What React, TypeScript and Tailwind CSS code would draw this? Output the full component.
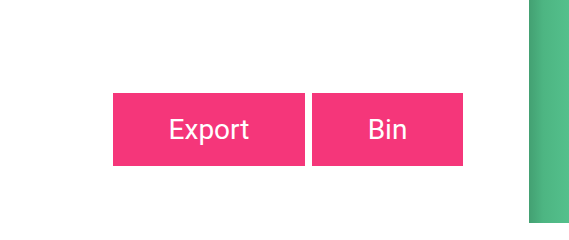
export default function App() {
  return (
    <div className="flex h-[223px] w-[569px] bg-white font-['Roboto',sans-serif]">
      {/* main area */}
      <div className="flex flex-1 items-start pl-[113px] pt-[93px]">
        <div className="flex gap-[7px]">
          <button className="flex h-[73px] w-[192px] items-center justify-center bg-[#f5367a] text-[28px] text-white">
            Export
          </button>
          <button className="flex h-[73px] w-[151px] items-center justify-center bg-[#f5367a] text-[28px] text-white">
            Bin
          </button>
        </div>
      </div>

      {/* side panel */}
      <div className="h-full w-[40px] bg-gradient-to-r from-[#43a072] via-[#4db582] via-35% to-[#54c08c]"></div>
    </div>
  );
}
